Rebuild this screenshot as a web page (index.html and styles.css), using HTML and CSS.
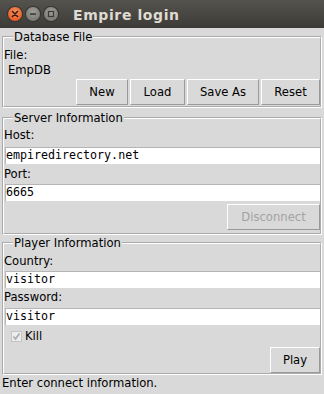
FILE: index.html
```html
<!DOCTYPE html>
<html>
<head>
<meta charset="utf-8">
<link rel="stylesheet" href="styles.css">
</head>
<body>
<div class="titlebar">
  <div class="wbtns">
    <span class="wb close"><svg width="14" height="14" viewBox="0 0 14 14"><path d="M4.5 4.5L9.5 9.5M9.5 4.5L4.5 9.5" stroke="#3c1a0c" stroke-width="1.6" stroke-linecap="round"/></svg></span>
    <span class="wb"><svg width="14" height="14" viewBox="0 0 14 14"><path d="M4 7H10" stroke="#3b3a36" stroke-width="1.6"/></svg></span>
    <span class="wb"><svg width="14" height="14" viewBox="0 0 14 14"><rect x="4.5" y="4.5" width="5" height="5" fill="none" stroke="#3b3a36" stroke-width="1.2"/></svg></span>
  </div>
  <div class="title">Empire login</div>
</div>
<div class="window">
  <fieldset class="group g1">
    <legend>Database File</legend>
    <div class="lbl">File:</div>
    <div class="lbl indent">EmpDB</div>
    <div class="btnrow">
      <button class="btn w-new">New</button>
      <button class="btn w-load">Load</button>
      <button class="btn w-save">Save As</button>
      <button class="btn w-reset">Reset</button>
    </div>
  </fieldset>
  <fieldset class="group g2">
    <legend>Server Information</legend>
    <div class="lbl">Host:</div>
    <div class="entry e-first">empiredirectory.net</div>
    <div class="lbl l-next">Port:</div>
    <div class="entry e-next">6665</div>
    <div class="btnrow r-disc">
      <button class="btn w-disc" disabled>Disconnect</button>
    </div>
  </fieldset>
  <fieldset class="group g3">
    <legend>Player Information</legend>
    <div class="lbl">Country:</div>
    <div class="entry e-c">visitor</div>
    <div class="lbl l-pass">Password:</div>
    <div class="entry e-p">visitor</div>
    <div class="check">
      <span class="cbox"><svg width="11" height="11" viewBox="0 0 11 11"><path d="M2.5 5.5L4.5 8L8.5 2.5" fill="none" stroke="#a8a8a8" stroke-width="1.5"/></svg></span>
      <span>Kill</span>
    </div>
    <div class="btnrow r-play">
      <button class="btn w-play">Play</button>
    </div>
  </fieldset>
  <div class="status">Enter connect information.</div>
</div>
</body>
</html>
```
FILE: styles.css
```css
html, body {
  margin: 0;
  padding: 0;
}
body {
  width: 324px;
  height: 394px;
  overflow: hidden;
  background: #d9d9d9;
  font-family: "DejaVu Sans", sans-serif;
  font-size: 11.6px;
  color: #000;
}
.titlebar {
  height: 28px;
  background: linear-gradient(#54534e, #3c3b37);
  display: flex;
  align-items: center;
}
.wbtns {
  display: flex;
  gap: 4px;
  margin-left: 8px;
}
.wb {
  width: 14px;
  height: 14px;
  border-radius: 50%;
  background: radial-gradient(circle at 50% 35%, #a09e97, #6f6d67);
  box-shadow: 0 0 0 1px #35342f;
  display: flex;
}
.wb.close {
  background: radial-gradient(circle at 50% 35%, #f7915e, #df4b17);
}
.title {
  margin-left: 15px;
  color: #dfdbd2;
  font-weight: bold;
  font-size: 14px;
  letter-spacing: 0.6px;
  font-family: "DejaVu Sans", sans-serif;
  padding-top: 1px;
}
.window {
  display: flex;
  flex-direction: column;
}
.group {
  margin: 0 2px;
  padding: 0;
  border: 2px groove #ffffff;
  min-width: 0;
}
.group legend {
  margin-left: 9px;
  padding: 0 1px;
  line-height: 16px;
}
.g1 { margin-top: 1px; padding: 3px 0 1px; }
.g2 { margin-top: 2px; padding: 2px 0 3px; }
.g3 { margin-top: 0; padding: 3px 0 0; }
.lbl {
  line-height: 15px;
}
.lbl.indent { padding-left: 4px; }
.btnrow {
  display: flex;
  justify-content: flex-end;
  gap: 2px;
  margin-top: 1px;
}
.btn {
  font-family: "DejaVu Sans", sans-serif;
  font-size: 11.6px;
  height: 26px;
  margin: 0;
  padding: 0;
  background: #d9d9d9;
  color: #000;
  border: 1px solid;
  border-color: #ffffff #9a9a9a #9a9a9a #ffffff;
  border-radius: 0;
}
.btn:disabled { color: #a3a3a3; }
.w-new { width: 52px; }
.w-load { width: 55px; }
.w-save { width: 72px; }
.w-reset { width: 59px; }
.w-disc { width: 93px; }
.w-play { width: 50px; }
.entry {
  height: 17px;
  box-sizing: border-box;
  margin: 0 0 0 1px;
  background: #fff;
  border-top: 1px solid #b5b5b5;
  border-left: 1px solid #b5b5b5;
  font-family: "DejaVu Sans Mono", monospace;
  font-size: 11.65px;
  line-height: 15px;
}
.e-first { margin-top: 4px; }
.e-next { margin-top: 2px; }
.l-next { margin-top: 3px; }
.r-disc { margin-top: 3px; }
.e-c { margin-top: 2px; }
.l-pass { margin-top: 2px; }
.e-p { margin-top: 3px; }
.check {
  display: flex;
  align-items: center;
  gap: 3px;
  height: 16px;
  margin-top: 3px;
  padding-left: 7px;
}
.cbox {
  width: 11px;
  height: 11px;
  box-sizing: border-box;
  background: #ececec;
  border: 1px solid #c4c4c4;
  display: flex;
}
.cbox svg { margin: -1px; }
.r-play { margin-top: 3px; }
.status {
  line-height: 15px;
  padding-left: 2px;
  margin-top: 1px;
}
```
